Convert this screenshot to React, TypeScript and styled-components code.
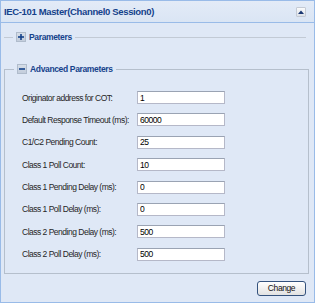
import React from 'react';
import styled, { createGlobalStyle } from 'styled-components';

const GlobalStyle = createGlobalStyle`
  body {
    margin: 0;
    background: #ffffff;
    font-family: "Liberation Sans", Arial, sans-serif;
  }
`;

const Panel = styled.div`
  width: 315px;
  box-sizing: border-box;
  border: 1px solid #99bbe8;
  background: #dfe8f6;
`;

const Header = styled.div`
  height: 21px;
  border-bottom: 1px solid #99bbe8;
  display: flex;
  align-items: center;
  justify-content: space-between;
  padding: 0 8px 0 3px;
  background: linear-gradient(#e3ebf7, #dae5f4);
`;

const Title = styled.span`
  font-size: 9.5px;
  font-weight: bold;
  letter-spacing: -0.35px;
  color: #15428b;
`;

const ToolButton = styled.div`
  width: 10px;
  height: 10px;
  box-sizing: border-box;
  border: 1px solid #c4cad4;
  border-radius: 1px;
  background: linear-gradient(#fafbfc, #dce1e8);
  display: flex;
  align-items: center;
  justify-content: center;
`;

const Body = styled.div`
  padding: 9px 5px 6px 3px;
  display: flex;
  flex-direction: column;
`;

const SetHead = styled.div<{ collapsed?: boolean }>`
  display: flex;
  height: 10px;
  margin-right: ${p => (p.collapsed ? '3px' : '0')};
`;

const Corner = styled.div<{ side: 'left' | 'right'; open?: boolean }>`
  margin-top: 5px;
  border-top: 1px solid ${p => (p.open ? '#b5bfcc' : '#c2cad5')};
  border-${p => p.side}: ${p => (p.open ? '1px solid #b5bfcc' : 'none')};
  ${p => (p.side === 'left' ? 'width: 9px; margin-right: 3px;' : 'flex: 1; margin-left: 3px;')}
`;

const Toggle = styled.div`
  width: 10px;
  height: 10px;
  box-sizing: border-box;
  border: 1px solid #b0bccc;
  background: linear-gradient(#d6dee8, #c3cddc);
  display: flex;
  align-items: center;
  justify-content: center;
`;

const Legend = styled.span`
  margin-left: 3px;
  font-size: 8.5px;
  font-weight: bold;
  letter-spacing: -0.35px;
  line-height: 10px;
  color: #15428b;
`;

const SetBody = styled.div`
  margin-top: 22px;
`;

const Fields = styled.div`
  border: 1px solid #b5bfcc;
  border-top: none;
  padding: 17px 0 12px 17px;
  display: flex;
  flex-direction: column;
  gap: 9.4px;
`;

const Row = styled.div`
  display: flex;
  align-items: center;
`;

const Label = styled.label`
  width: 115px;
  font-size: 8.5px;
  letter-spacing: -0.5px;
  white-space: nowrap;
  color: #262626;
`;

const Input = styled.input`
  width: 88px;
  height: 13px;
  box-sizing: border-box;
  margin: 0;
  padding: 0 2px;
  border: 1px solid #b5b8c8;
  border-top-color: #9aa3b3;
  background: #ffffff;
  font-family: inherit;
  font-size: 8.5px;
  letter-spacing: -0.5px;
  color: #000;
  outline: none;
`;

const Footer = styled.div`
  display: flex;
  justify-content: flex-end;
  padding: 7px 3px 0 0;
`;

const Button = styled.button`
  width: 49px;
  height: 15px;
  box-sizing: border-box;
  padding: 0;
  border: 1px solid #34527d;
  border-radius: 3px;
  background: linear-gradient(#ffffff, #e2e2e2);
  font-family: inherit;
  font-size: 8.5px;
  letter-spacing: -0.4px;
  color: #111;
  cursor: pointer;
`;

const fields = [
  ['Originator address for COT:', '1'],
  ['Default Response Timeout (ms):', '60000'],
  ['C1/C2 Pending Count:', '25'],
  ['Class 1 Poll Count:', '10'],
  ['Class 1 Pending Delay (ms):', '0'],
  ['Class 1 Poll Delay (ms):', '0'],
  ['Class 2 Pending Delay (ms):', '500'],
  ['Class 2 Poll Delay (ms):', '500'],
];

const Glyph = ({ plus }: { plus?: boolean }) => (
  <svg width="6" height="6" viewBox="0 0 6 6">
    <rect x="0" y="2.2" width="6" height="1.6" fill="#15428b" />
    {plus && <rect x="2.2" y="0" width="1.6" height="6" fill="#15428b" />}
  </svg>
);

export default function App() {
  return (
    <>
      <GlobalStyle />
      <Panel>
        <Header>
          <Title>IEC-101 Master(Channel0 Session0)</Title>
          <ToolButton>
            <svg width="6" height="4" viewBox="0 0 6 4">
              <polygon points="0,4 3,0.5 6,4" fill="#1a3772" />
            </svg>
          </ToolButton>
        </Header>
        <Body>
          <SetHead collapsed>
            <Corner side="left" />
            <Toggle><Glyph plus /></Toggle>
            <Legend>Parameters</Legend>
            <Corner side="right" />
          </SetHead>
          <SetBody>
            <SetHead>
              <Corner side="left" open />
              <Toggle><Glyph /></Toggle>
              <Legend>Advanced Parameters</Legend>
              <Corner side="right" open />
            </SetHead>
            <Fields>
              {fields.map(([label, value]) => (
                <Row key={label}>
                  <Label>{label}</Label>
                  <Input defaultValue={value} />
                </Row>
              ))}
            </Fields>
          </SetBody>
          <Footer>
            <Button>Change</Button>
          </Footer>
        </Body>
      </Panel>
    </>
  );
}
